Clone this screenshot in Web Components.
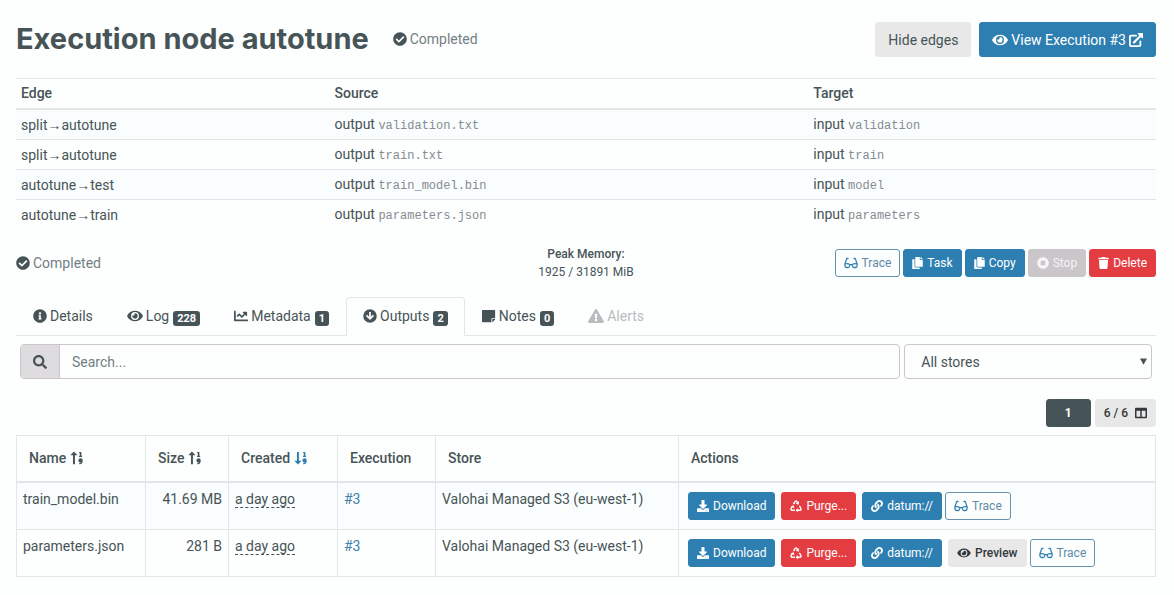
<!DOCTYPE html>
<html lang="en">
<head>
<meta charset="utf-8">
<title>Execution node autotune</title>
<style>
  body {
    margin: 0;
    background: #fdfefe;
    color: #475457;
    font: 14px/20px Roboto, "Liberation Sans", sans-serif;
    --blue: #2e7fb1;
    --red: #e33d42;
    --dark: #475457;
    --muted: #727e83;
    --line: #e3e6e6;
    --stripe: #f9fdfd;
    --light: #e8e8e8;
  }
</style>
</head>
<body>
<execution-page></execution-page>
<script>
const ICONS = {
  check: [512, '<path d="M504 256c0 136.967-111.033 248-248 248S8 392.967 8 256 119.033 8 256 8s248 111.033 248 248zM227.314 387.314l184-184c6.248-6.248 6.248-16.379 0-22.627l-22.627-22.627c-6.248-6.249-16.379-6.249-22.628 0L216 308.118l-70.059-70.059c-6.248-6.248-16.379-6.248-22.628 0l-22.627 22.627c-6.248 6.248-6.248 16.379 0 22.627l104 104c6.249 6.249 16.379 6.249 22.628.001z"/>'],
  eye: [576, '<path d="M572.52 241.4C518.29 135.59 410.93 64 288 64S57.68 135.64 3.48 241.41a32.35 32.35 0 0 0 0 29.19C57.71 376.41 165.07 448 288 448s230.32-71.64 284.52-177.41a32.35 32.35 0 0 0 0-29.19zM288 400a144 144 0 1 1 144-144 143.93 143.93 0 0 1-144 144zm0-240a95.31 95.31 0 0 0-25.31 3.79 47.85 47.85 0 0 1-66.9 66.9A95.78 95.78 0 1 0 288 160z"/>'],
  info: [512, '<path d="M256 8C119.043 8 8 119.083 8 256c0 136.997 111.043 248 248 248s248-111.003 248-248C504 119.083 392.957 8 256 8zm0 110c23.196 0 42 18.804 42 42s-18.804 42-42 42-42-18.804-42-42 18.804-42 42-42zm56 254c0 6.627-5.373 12-12 12h-88c-6.627 0-12-5.373-12-12v-24c0-6.627 5.373-12 12-12h12v-64h-12c-6.627 0-12-5.373-12-12v-24c0-6.627 5.373-12 12-12h64c6.627 0 12 5.373 12 12v100h12c6.627 0 12 5.373 12 12v24z"/>'],
  chart: [512, '<path d="M496 384H64V80c0-8.84-7.16-16-16-16H16C7.16 64 0 71.16 0 80v336c0 17.67 14.33 32 32 32h464c8.84 0 16-7.16 16-16v-32c0-8.84-7.16-16-16-16zM464 96H345.94c-21.38 0-32.09 25.85-16.97 40.97l32.4 32.4L288 242.75l-73.37-73.37c-12.5-12.5-32.76-12.5-45.25 0l-68.69 68.69c-6.25 6.25-6.25 16.38 0 22.63l22.62 22.62c6.25 6.25 16.38 6.25 22.63 0L192 237.25l73.37 73.37c12.5 12.5 32.76 12.5 45.25 0l96-96 32.4 32.4c15.12 15.12 40.97 4.41 40.97-16.97V112c.01-8.84-7.15-16-15.99-16z"/>'],
  search: [512, '<path d="M505 442.7L405.3 343c-4.5-4.5-10.6-7-17-7H372c27.6-35.3 44-79.7 44-128C416 93.1 322.9 0 208 0S0 93.1 0 208s93.1 208 208 208c48.3 0 92.7-16.4 128-44v16.3c0 6.4 2.5 12.5 7 17l99.7 99.7c9.4 9.4 24.6 9.4 33.9 0l28.3-28.3c9.4-9.4 9.4-24.6.1-34zM208 336c-70.7 0-128-57.2-128-128 0-70.7 57.2-128 128-128 70.7 0 128 57.2 128 128 0 70.7-57.2 128-128 128z"/>'],
  note: [512, '<path d="M368 336h112V56c0-13.300-11-24-24-24H24C10.700 32 0 42.700 0 56v400c0 13.300 10.700 24 24 24h320V360c0-13.200 10.800-24 24-24zM473 391l-82 82c-4.500 4.500-10 7-16 7V368h105v6c0 6-2.500 12-7 17z"/>'],
  warning: [576, '<path d="M569.517 440.013C587.975 472.007 564.806 512 527.94 512H48.054c-36.937 0-59.999-40.055-41.577-71.987L246.423 23.985c18.467-32.009 64.72-31.951 83.154 0l239.94 416.028zM288 354c-25.405 0-46 20.595-46 46s20.595 46 46 46 46-20.595 46-46-20.595-46-46-46zm-43.673-165.346l7.418 136c.347 6.364 5.609 11.346 11.982 11.346h48.546c6.373 0 11.635-4.982 11.982-11.346l7.418-136c.375-6.874-5.098-12.654-11.982-12.654h-63.383c-6.884 0-12.356 5.78-11.981 12.654z"/>'],
  down: [512, '<path fill-rule="evenodd" d="M256 8a248 248 0 1 1 0 496 248 248 0 0 1 0-496zM224 112v172l-72-72-45 45 149 149 149-149-45-45-72 72V112z"/>'],
  copy: [448, '<path d="M320 448v40c0 13.255-10.745 24-24 24H24c-13.255 0-24-10.745-24-24V120c0-13.255 10.745-24 24-24h72v296c0 30.879 25.121 56 56 56h168zm0-344V0H152c-13.255 0-24 10.745-24 24v368c0 13.255 10.745 24 24 24h272c13.255 0 24-10.745 24-24V128H344c-13.2 0-24-10.8-24-24zm120.971-31.029L375.029 7.029A24 24 0 0 0 358.059 0H352v96h96v-6.059a24 24 0 0 0-7.029-16.97z"/>'],
  stop: [512, '<path d="M256 8C119 8 8 119 8 256s111 248 248 248 248-111 248-248S393 8 256 8zm96 328c0 8.8-7.2 16-16 16H176c-8.8 0-16-7.2-16-16V176c0-8.8 7.2-16 16-16h160c8.8 0 16 7.2 16 16v160z"/>'],
  trash: [448, '<path d="M432 32H312l-9.4-18.7A24 24 0 0 0 281.1 0H166.8a23.72 23.72 0 0 0-21.4 13.3L136 32H16A16 16 0 0 0 0 48v32a16 16 0 0 0 16 16h416a16 16 0 0 0 16-16V48a16 16 0 0 0-16-16zM53.2 467a48 48 0 0 0 47.9 45h245.8a48 48 0 0 0 47.9-45L416 128H32z"/>'],
  download: [512, '<path d="M216 0h80c13.3 0 24 10.7 24 24v168h87.7c17.8 0 26.7 21.5 14.1 34.1L269.7 378.3c-7.5 7.5-19.8 7.5-27.3 0L90.1 226.1c-12.6-12.6-3.7-34.1 14.1-34.1H192V24c0-13.3 10.7-24 24-24zm296 376v112c0 13.3-10.7 24-24 24H24c-13.3 0-24-10.7-24-24V376c0-13.3 10.7-24 24-24h146.7l49 49c20.1 20.1 52.5 20.1 72.6 0l49-49H488c13.3 0 24 10.7 24 24zm-124 88c0-11-9-20-20-20s-20 9-20 20 9 20 20 20 20-9 20-20zm64 0c0-11-9-20-20-20s-20 9-20 20 9 20 20 20 20-9 20-20z"/>'],
  link: [512, '<path d="M326.612 185.391c59.747 59.809 58.927 155.698.36 214.59-.11.12-.24.25-.36.37l-67.2 67.2c-59.27 59.27-155.699 59.262-214.96 0-59.27-59.26-59.27-155.7 0-214.96l37.106-37.106c9.84-9.84 26.786-3.3 27.294 10.606.648 17.722 3.826 35.527 9.69 52.721 1.986 5.822.567 12.262-3.783 16.612l-13.087 13.087c-28.026 28.026-28.905 73.66-1.155 101.96 28.024 28.579 74.086 28.749 102.325.51l67.2-67.19c28.191-28.191 28.073-73.757 0-101.83-3.701-3.694-7.429-6.564-10.341-8.569a16.037 16.037 0 0 1-6.947-12.606c-.396-10.567 3.348-21.456 11.698-29.806l21.054-21.055c5.521-5.521 14.182-6.199 20.584-1.731a152.482 152.482 0 0 1 20.522 17.197zM467.547 44.449c-59.261-59.262-155.69-59.27-214.96 0l-67.2 67.2c-.12.12-.25.25-.36.37-58.566 58.892-59.387 154.781.36 214.59a152.454 152.454 0 0 0 20.521 17.196c6.402 4.468 15.064 3.789 20.584-1.731l21.054-21.055c8.35-8.35 12.094-19.239 11.698-29.806a16.037 16.037 0 0 0-6.947-12.606c-2.912-2.005-6.64-4.875-10.341-8.569-28.073-28.073-28.191-73.639 0-101.83l67.2-67.19c28.239-28.239 74.3-28.069 102.325.51 27.75 28.3 26.872 73.934-1.155 101.96l-13.087 13.087c-4.35 4.35-5.769 10.79-3.783 16.612 5.864 17.194 9.042 34.999 9.69 52.721.509 13.906 17.454 20.446 27.294 10.606l37.106-37.106c59.271-59.259 59.271-155.699.001-214.959z"/>'],
  columns: [512, '<path d="M464 32H48C21.49 32 0 53.49 0 80v352c0 26.51 21.49 48 48 48h416c26.51 0 48-21.49 48-48V80c0-26.51-21.49-48-48-48zM224 416H64V160h160v256zm224 0H288V160h160v256z"/>'],
  external: [512, '<path fill="none" stroke="currentColor" stroke-width="66" stroke-linejoin="round" stroke-linecap="round" d="M260 96H70q-36 0-36 36v310q0 36 36 36h310q36 0 36-36V310"/><path d="M330 0h158q24 0 24 24v158q-6 26-32 12l-45-45-235 235q-12 10-24 0l-32-32q-10-12 0-24l235-235-58-58Q306 10 330 0z"/>'],
  glasses: [576, '<path fill="none" stroke="currentColor" stroke-width="54" stroke-linejoin="round" stroke-linecap="round" d="M160 64h-30q-26 0-34 28L28 300v76q0 72 72 72h56q64 0 72-64l8-66Q130 260 28 300M416 64h30q26 0 34 28l68 208v76q0 72-72 72h-56q-64 0-72-64l-8-66q106-58 208-18M236 330h104"/>'],
  recycle: [512, '<g fill="none" stroke="currentColor" stroke-width="62" stroke-linejoin="round"><path d="M150 178l70-116q36-50 72 0l42 70"/><path d="M400 248l62 104q26 72-42 86H310"/><path d="M210 438H92q-68-14-42-80l46-78"/></g><path d="M390 58l-20 140-132-40zM336 346v182l-96-90zM30 262l124-38 34 132z"/>'],
  sortup: [512, '<path d="M108 480V154H32q-12-6-4-18L136 24q8-8 16 0l108 112q8 12-4 18h-76v326zM336 32h80v138h28v48H330v-48h28V78h-22zM384 264c52 0 80 30 80 88 0 76-36 128-98 128h-26v-46h18c24 0 36-8 42-22-52 8-92-20-92-66 0-48 30-82 76-82z"/>'],
  sortdown: [512, '<path d="M108 32v326H32q-12 6-4 18l108 112q8 8 16 0l108-112q8-12-4-18h-76V32zM336 32h80v138h28v48H330v-48h28V78h-22zM384 264c52 0 80 30 80 88 0 76-36 128-98 128h-26v-46h18c24 0 36-8 42-22-52 8-92-20-92-66 0-48 30-82 76-82z"/>'],
  caret: [512, '<path d="M0 40h512L256 500z"/>']
};

class FaIcon extends HTMLElement {
  connectedCallback() {
    if (this.shadowRoot) return;
    const [width, body] = ICONS[this.getAttribute('name')];
    const size = Number(this.getAttribute('size') || 14);
    const w = Math.round(size * width / 512);
    this.attachShadow({ mode: 'open' }).innerHTML = `
      <style>:host{display:inline-flex;flex:none} svg{display:block;fill:currentColor}</style>
      <svg width="${w}" height="${size}" viewBox="0 0 ${width} 512" aria-hidden="true">${body}</svg>`;
  }
}

class UiElement extends HTMLElement {
  connectedCallback() {
    if (this.shadowRoot) return;
    this.attachShadow({ mode: 'open' }).innerHTML = this.template();
  }
}

class UiButton extends UiElement {
  template() {
    return `<style>
      :host { display: inline-flex; flex: none; }
      button { display: flex; align-items: center; gap: 4px; height: 28px; padding: 0 8px; margin: 0;
        border: 1px solid var(--blue); border-radius: 3px; background: var(--blue); color: #fff;
        font: inherit; font-size: 12px; line-height: 18px; white-space: nowrap; }
      :host([large]) button { gap: 3px; height: 35px; padding: 0 12px; font-size: 14px; line-height: 20px; }
      :host([kind=danger]) button { background: var(--red); border-color: var(--red); }
      :host([kind=light]) button { background: var(--light); border-color: var(--light); color: var(--dark); }
      :host([kind=strong]) button { background: var(--light); border-color: var(--light); color: #33393b; font-weight: 500; }
      :host([kind=outline]) button { background: #fdfefe; border-color: #6794ac; color: #5e8ba5; }
      :host([kind=outline]) fa-icon { color: var(--blue); }
      :host([kind=dark]) button { background: var(--dark); border-color: var(--dark); font-weight: 700; padding: 0 18px; }
      :host([disabled]) button { background: #cac6ca; border-color: #cac6ca; color: #f6f4f6; }
    </style><button type="button"${this.hasAttribute('disabled') ? ' disabled' : ''}>${
      this.hasAttribute('icon') ? `<fa-icon name="${this.getAttribute('icon')}" size="${this.hasAttribute('large') ? 14 : 12}"></fa-icon>` : ''
    }<slot></slot></button>`;
  }
}

class RunStatus extends UiElement {
  template() {
    return `<style>:host{display:flex;align-items:center;gap:3px;color:var(--muted)} fa-icon{color:var(--dark)}</style>
      <fa-icon name="check"></fa-icon><slot></slot>`;
  }
}

class PageHeader extends UiElement {
  template() {
    return `<style>
      :host { display: flex; align-items: center; gap: 8px; padding-top: 22px; }
      h1 { margin: 0 16px 0 0; padding-bottom: 2px; font: 700 29px/33px Inter, "Open Sans", sans-serif; }
      run-status { padding-bottom: 2px; }
      .space { flex: 1; }
    </style>
    <h1>Execution node autotune</h1><run-status>Completed</run-status><span class="space"></span>
    <ui-button large kind="light">Hide edges</ui-button>
    <ui-button large icon="eye">View Execution #3 <fa-icon name="external"></fa-icon></ui-button>`;
  }
}

class EdgeTable extends UiElement {
  template() {
    const rows = [
      ['split', 'autotune', 'validation.txt', 'validation'],
      ['split', 'autotune', 'train.txt', 'train'],
      ['autotune', 'test', 'train_model.bin', 'model'],
      ['autotune', 'train', 'parameters.json', 'parameters']
    ];
    return `<style>
      :host { display: block; margin-top: 21px; }
      table { width: 100%; table-layout: fixed; border-collapse: separate; border-spacing: 0; }
      th, td { height: 30px; box-sizing: border-box; padding: 0 0 0 5px; border-top: 1px solid var(--line); text-align: left; }
      th { height: 31px; padding-bottom: 1px; font-weight: 500; border-bottom: 1px solid var(--line); }
      col:nth-child(1) { width: 27.5%; } col:nth-child(2) { width: 42%; }
      tbody tr:nth-child(odd) { background: var(--stripe); }
      .arrow { line-height: 18px; }
      code { font: 12px/18px "Liberation Mono", monospace; color: #858b92; }
    </style>
    <table><colgroup><col><col><col></colgroup><thead><tr><th>Edge</th><th>Source</th><th>Target</th></tr></thead><tbody>${
      rows.map(([a, b, s, t]) => `<tr><td>${a}<span class="arrow">→</span>${b}</td><td>output <code>${s}</code></td><td>input <code>${t}</code></td></tr>`).join('')
    }</tbody></table>`;
  }
}

class ExecutionBar extends UiElement {
  template() {
    return `<style>
      :host { display: grid; grid-template-columns: 1fr auto 1fr; align-items: center; margin-top: 16px; }
      .memory { font-size: 12px; line-height: 18px; text-align: center; }
      b { display: block; font-weight: 500; }
      .actions { display: flex; justify-content: flex-end; gap: 3px; }
    </style>
    <run-status>Completed</run-status>
    <div class="memory"><b>Peak Memory:</b>1925 / 31891 MiB</div>
    <div class="actions">
      <ui-button kind="outline" icon="glasses">Trace</ui-button>
      <ui-button icon="copy">Task</ui-button>
      <ui-button icon="copy">Copy</ui-button>
      <ui-button icon="stop" disabled>Stop</ui-button>
      <ui-button kind="danger" icon="trash">Delete</ui-button>
    </div>`;
  }
}

class TabItem extends UiElement {
  template() {
    const count = this.getAttribute('count');
    return `<style>
      :host { display: block; margin-bottom: -1px; }
      a { display: flex; align-items: center; gap: 3px; height: 35px; padding: 0 16px 2px; border: 1px solid transparent;
        border-radius: 4px 4px 0 0; color: var(--dark); text-decoration: none; }
      :host([active]) a { border-color: var(--line) var(--line) #fdfefe; background: #fdfefe; }
      :host([muted]) a { color: #b9bcbe; }
      .badge { margin: 6px 0 0 1px; padding: 0 4px; border-radius: 3px; background: var(--dark); color: #fff; font-size: 11px; line-height: 15px; font-weight: 700; }
    </style><a href="#"${this.hasAttribute('muted') ? ' aria-disabled="true"' : ''}><fa-icon name="${this.getAttribute('icon')}"></fa-icon><slot></slot>${
      count === null ? '' : `<span class="badge">${count}</span>`}</a>`;
  }
}

class TabBar extends UiElement {
  template() {
    return `<style>:host{display:flex;margin-top:16px;border-bottom:1px solid var(--line)}</style><slot></slot>`;
  }
}

class OutputFilter extends UiElement {
  template() {
    return `<style>
      :host { display: flex; gap: 4px; margin: 8px 4px 0; }
      .search { display: flex; flex: 78; box-sizing: border-box; height: 35px; border: 1px solid #cac6ca; border-radius: 4px; overflow: hidden; }
      label { display: flex; align-items: center; justify-content: center; width: 38px; border-right: 1px solid #cac6ca; background: #dedcde; }
      input { flex: 1; min-width: 0; padding: 0 12px; border: 0; background: transparent; font: inherit; color: inherit; outline: 0; }
      input::placeholder { color: var(--muted); opacity: 1; }
      .stores { display: grid; flex: 22; align-items: center; }
      select { grid-area: 1 / 1; appearance: none; box-sizing: border-box; width: 100%; height: 35px; padding: 0 16px; border: 1px solid #cac6ca;
        border-radius: 4px; background: transparent; font: inherit; color: inherit; }
      fa-icon { pointer-events: none; }
      .stores fa-icon { grid-area: 1 / 1; justify-self: end; margin-right: 5px; }
    </style>
    <div class="search"><label for="q" aria-label="Search"><fa-icon name="search"></fa-icon></label><input id="q" type="text" placeholder="Search..."></div>
    <div class="stores"><select aria-label="Store"><option>All stores</option></select><fa-icon name="caret" size="7"></fa-icon></div>`;
  }
}

class OutputPager extends UiElement {
  template() {
    return `<style>:host{display:flex;justify-content:flex-end;gap:4px;margin:20px 0 8px} fa-icon{margin-left:3px}</style>
      <ui-button kind="dark">1</ui-button><ui-button kind="strong">6 / 6 <fa-icon name="columns" size="12"></fa-icon></ui-button>`;
  }
}

class OutputTable extends UiElement {
  template() {
    const row = (name, size, preview) => `<tr><td>${name}</td><td class="num">${size}</td><td><span class="time">a day ago</span></td>
      <td><a href="#">#3</a></td><td>Valohai Managed S3 (eu-west-1)</td><td><div class="actions">
      <ui-button icon="download">Download</ui-button><ui-button kind="danger" icon="recycle">Purge...</ui-button><ui-button icon="link">datum://</ui-button>${
      preview ? '<ui-button kind="strong" icon="eye">Preview</ui-button>' : ''}<ui-button kind="outline" icon="glasses">Trace</ui-button></div></td></tr>`;
    return `<style>
      :host { display: block; }
      table { width: 100%; table-layout: fixed; border-collapse: separate; border-spacing: 0; border: solid var(--line); border-width: 1px 0 0 1px; }
      th, td { border: solid var(--line); border-width: 0 1px 1px 0; text-align: left; white-space: nowrap; }
      th { height: 43px; padding: 0 12px 2px; border-bottom-width: 2px; font-weight: 500; }
      td { height: 40px; padding: 6px 6px 0; vertical-align: top; }
      col:nth-child(1) { width: 129px; } col:nth-child(2) { width: 83px; } col:nth-child(3) { width: 109px; }
      col:nth-child(4) { width: 98px; } col:nth-child(5) { width: 243px; }
      tbody tr:nth-child(odd) { background: var(--stripe); }
      .num { text-align: right; }
      .time { border-bottom: 1px dashed var(--dark); }
      a { color: #437fa8; text-decoration: none; }
      th fa-icon { vertical-align: -2px; }
      .on { color: var(--blue); }
      .actions { display: flex; gap: 6px; padding: 3px 0 0 3px; }
      .actions [kind=outline] { margin-left: -3px; }
    </style>
    <table><colgroup><col><col><col><col><col><col></colgroup>
      <thead><tr><th>Name <fa-icon name="sortup"></fa-icon></th><th>Size <fa-icon name="sortup"></fa-icon></th><th>Created <fa-icon class="on" name="sortdown"></fa-icon></th>
      <th>Execution</th><th>Store</th><th>Actions</th></tr></thead>
      <tbody>${row('train_model.bin', '41.69 MB', false)}${row('parameters.json', '281 B', true)}</tbody></table>`;
  }
}

class ExecutionPage extends UiElement {
  template() {
    return `<style>:host{display:block;padding:0 18px 18px 16px}</style>
      <page-header></page-header>
      <edge-table></edge-table>
      <execution-bar></execution-bar>
      <tab-bar>
        <tab-item icon="info">Details</tab-item>
        <tab-item icon="eye" count="228">Log</tab-item>
        <tab-item icon="chart" count="1">Metadata</tab-item>
        <tab-item icon="down" count="2" active>Outputs</tab-item>
        <tab-item icon="note" count="0">Notes</tab-item>
        <tab-item icon="warning" muted>Alerts</tab-item>
      </tab-bar>
      <output-filter></output-filter>
      <output-pager></output-pager>
      <output-table></output-table>`;
  }
}

for (const [name, type] of Object.entries({
  'fa-icon': FaIcon, 'ui-button': UiButton, 'run-status': RunStatus, 'page-header': PageHeader, 'edge-table': EdgeTable,
  'execution-bar': ExecutionBar, 'tab-item': TabItem, 'tab-bar': TabBar, 'output-filter': OutputFilter,
  'output-pager': OutputPager, 'output-table': OutputTable, 'execution-page': ExecutionPage
})) customElements.define(name, type);
</script>
</body>
</html>
